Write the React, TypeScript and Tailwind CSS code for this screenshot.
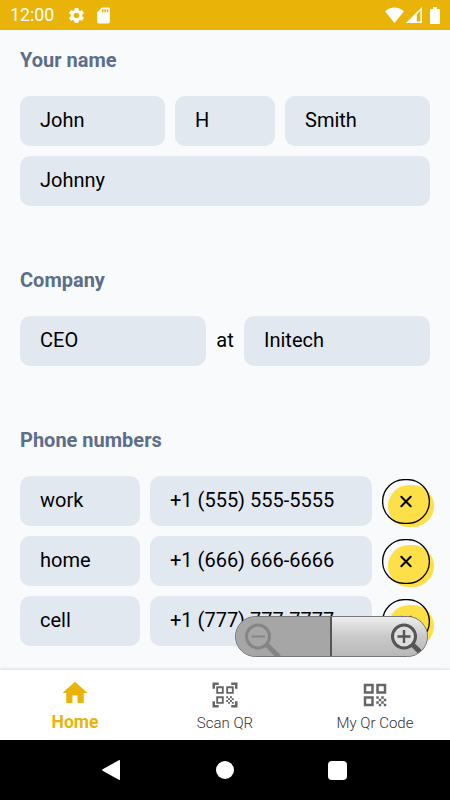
import React, { useState } from "react";
import {
  MdHome,
  MdQrCode,
  MdQrCodeScanner,
  MdSdCard,
  MdSettings,
} from "react-icons/md";

type PhoneNumber = {
  label: string;
  value: string;
};

const StatusBar = () => (
  <header className="flex h-[30px] shrink-0 items-center bg-[#eab308] px-2.5 text-white">
    <span className="w-[45px] text-[17.8px] leading-[30px]">12:00</span>
    <MdSettings className="ml-[12px] h-[19px] w-[19px]" />
    <MdSdCard className="ml-[8px] h-[19px] w-[19px]" />
    <div className="ml-auto flex items-center">
      <svg className="h-4 w-[19px]" viewBox="0 0 19 16">
        <path
          d="M0 4.2C5.5-.9 13.5-.9 19 4.2L9.5 16z"
          fill="currentColor"
        />
      </svg>
      <svg className="ml-0.5 h-4 w-4" viewBox="0 0 16 16">
        <path
          d="M16 0v16H0zm-1.6 3.6-3.6 3.6v7.2h3.6z"
          fill="currentColor"
          fillRule="evenodd"
        />
      </svg>
      <svg className="ml-2 h-[17px] w-[10px]" viewBox="0 0 10 17">
        <path
          d="M3 0h4v2h2q1 0 1 1v13q0 1-1 1H1q-1 0-1-1V3q0-1 1-1h2z"
          fill="currentColor"
        />
      </svg>
    </div>
  </header>
);

const Field = ({ value, className }: { value: string; className: string }) => {
  const [text, setText] = useState<string>(value);

  return (
    <input
      className={`h-[50px] min-w-0 rounded-[10px] bg-[#e2e8f0] px-5 pb-0.5 text-xl text-black outline-none ${className}`}
      value={text}
      onChange={(e) => setText(e.target.value)}
    />
  );
};

const SectionTitle = ({ children }: { children: React.ReactNode }) => (
  <h2 className="mb-5 h-[30px] text-xl font-bold leading-[29px] text-[#5c6e8a]">
    {children}
  </h2>
);

const RemoveButton = ({ onClick }: { onClick: () => void }) => (
  <button
    className="relative ml-2.5 h-[45px] w-12 shrink-0"
    onClick={onClick}
  >
    {/* offset blob behind the outline */}
    <span className="absolute left-1.5 top-1.5 h-[42px] w-[46px] rounded-[21px] bg-[#fde047]" />
    <svg
      className="absolute inset-0 h-[45px] w-12"
      viewBox="0 0 48 45"
      fill="none"
      stroke="black"
    >
      <rect
        x="0.6"
        y="0.6"
        width="46.8"
        height="43.8"
        rx="21.9"
        strokeWidth="1.3"
      />
      <path
        d="m19.3 17.8 9.4 9.4m0-9.4-9.4 9.4"
        strokeWidth="2"
        strokeLinecap="round"
      />
    </svg>
  </button>
);

const ZoomControls = () => (
  <div className="absolute left-[235px] top-[616px] flex h-[41px] w-[193px] overflow-hidden rounded-full border border-[#777777] bg-[#a6a6a6]">
    <button className="h-full w-[96px] border-r-2 border-[#555555] bg-[#a6a6a6]">
      <svg className="h-[39px] w-[94px]" viewBox="0 0 94 39" fill="none">
        <path d="m31 28 12 12" stroke="#858585" strokeWidth="5" />
        <circle cx="22" cy="19.5" r="11.5" stroke="#858585" strokeWidth="3" />
        <path d="M15.5 19.5H29" stroke="#858585" strokeWidth="2.2" />
      </svg>
    </button>
    <button className="h-full flex-1 bg-gradient-to-b from-[#ededed] via-[#cacaca] to-[#b8b8b8]">
      <svg className="h-[39px] w-[95px]" viewBox="0 0 95 39" fill="none">
        <path d="m81 28 10 10" stroke="#555555" strokeWidth="5" />
        <circle
          cx="72"
          cy="19.5"
          r="11.5"
          fill="#dedede"
          stroke="#555555"
          strokeWidth="3"
        />
        <path d="M65.5 19.5h13M72 13v13" stroke="#555555" strokeWidth="2.4" />
      </svg>
    </button>
  </div>
);

const TabBar = () => (
  <nav className="z-0 grid h-[70px] shrink-0 grid-cols-3 bg-white text-[#666666] shadow-[0_-1px_3px_rgba(0,0,0,0.12)]">
    <a className="flex flex-col items-center pt-2 text-[#eab308]">
      <MdHome className="h-[30px] w-[30px]" />
      <span className="mt-0.5 text-[17.5px] font-bold leading-6">Home</span>
    </a>
    <a className="flex flex-col items-center pt-2.5">
      <MdQrCodeScanner className="h-[30px] w-[30px]" />
      <span className="mt-px text-[15px] font-light leading-6 text-[#333333]">
        Scan QR
      </span>
    </a>
    <a className="flex flex-col items-center pt-2.5">
      <MdQrCode className="h-[30px] w-[30px]" />
      <span className="mt-px text-[15px] font-light leading-6 text-[#333333]">
        My Qr Code
      </span>
    </a>
  </nav>
);

const SystemNav = () => (
  <footer className="flex h-[60px] shrink-0 items-center bg-black pl-[102px]">
    <svg className="h-5 w-[18px] fill-white" viewBox="0 0 18 20">
      <path d="M16.8.3Q18-.3 18 1v18q0 1.3-1.2.7L.6 10.7q-1-.7 0-1.4z" />
    </svg>
    <span className="ml-24 h-[18px] w-[18px] rounded-full bg-white" />
    <span className="ml-[94px] h-[19px] w-[19px] rounded-sm bg-white" />
  </footer>
);

const App = () => {
  const [phones, setPhones] = useState<PhoneNumber[]>([
    { label: "work", value: "+1 (555) 555-5555" },
    { label: "home", value: "+1 (666) 666-6666" },
    { label: "cell", value: "+1 (777) 777-7777" },
  ]);

  const removePhone = (label: string) => {
    setPhones(phones.filter((phone) => phone.label !== label));
  };

  return (
    <div className="relative flex h-[800px] w-[450px] flex-col overflow-hidden bg-[#f8fafc] font-['Roboto',sans-serif]">
      <StatusBar />
      <main className="flex min-h-0 flex-1 flex-col gap-[60px] px-5 pt-4">
        <section>
          <SectionTitle>Your name</SectionTitle>
          <div className="flex gap-2.5">
            <Field value="John" className="w-[145px]" />
            <Field value="H" className="w-[100px]" />
            <Field value="Smith" className="w-[145px]" />
          </div>
          <Field value="Johnny" className="mt-2.5 block w-full" />
        </section>

        <section>
          <SectionTitle>Company</SectionTitle>
          <div className="flex items-center justify-between">
            <Field value="CEO" className="w-[186px]" />
            <span className="pb-0.5 text-xl">at</span>
            <Field value="Initech" className="w-[186px]" />
          </div>
        </section>

        <section>
          <SectionTitle>Phone numbers</SectionTitle>
          <div className="flex flex-col gap-2.5">
            {phones.map((phone) => (
              <div key={phone.label} className="flex items-center">
                <Field value={phone.label} className="w-[120px]" />
                <Field value={phone.value} className="ml-2.5 w-[222px]" />
                <RemoveButton onClick={() => removePhone(phone.label)} />
              </div>
            ))}
          </div>
        </section>
      </main>
      <TabBar />
      <SystemNav />
      <ZoomControls />
    </div>
  );
};

export default App;
